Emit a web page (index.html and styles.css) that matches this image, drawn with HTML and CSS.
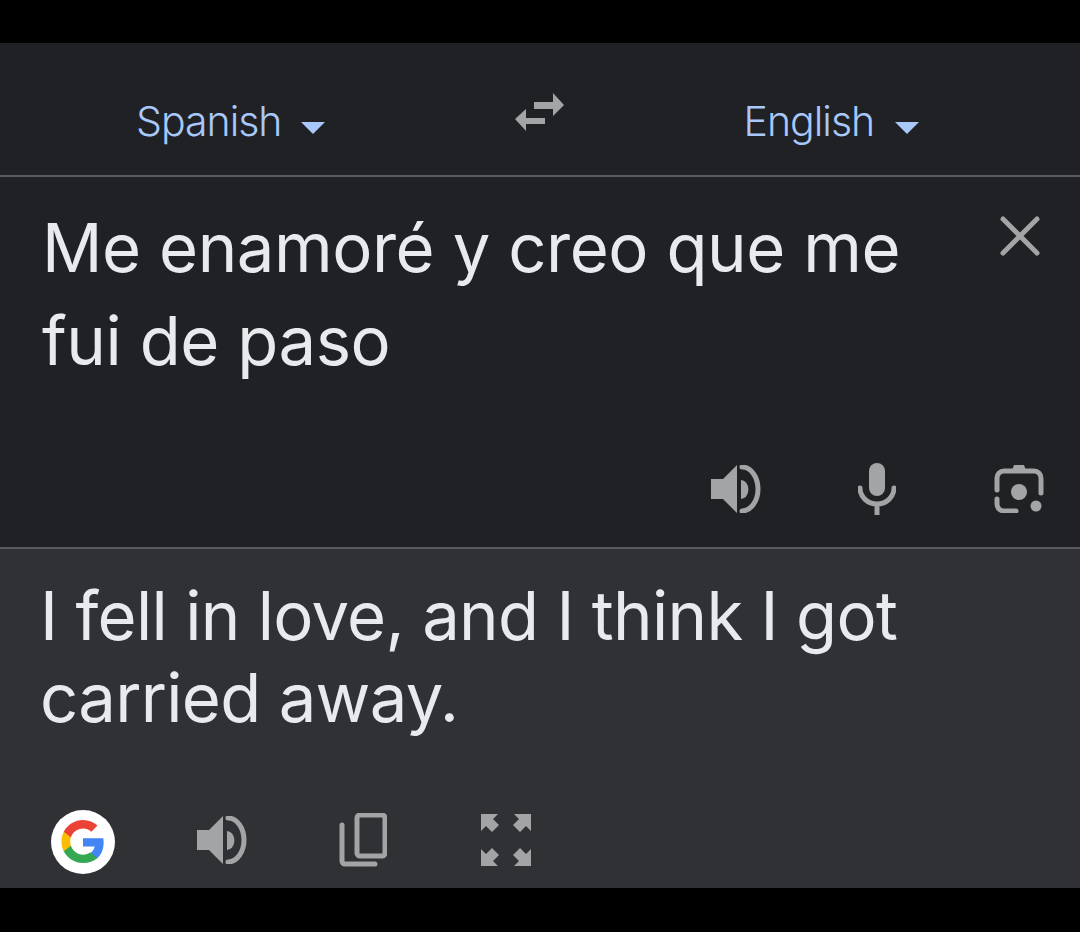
FILE: index.html
```html
<!DOCTYPE html>
<html lang="en">
	<head>
		<meta charset="UTF-8" />
		<title>Translate</title>
		<link rel="stylesheet" href="styles.css">
	</head>
	<body>
		<div class="translate">
			<div class="lang-bar">
				<button class="lang lang-from">Spanish <span class="caret"></span></button>
				<svg class="swap" width="50" height="38" viewBox="0 0 50 38">
					<path d="M19 9h19V0l11 12-11 11v-7H19z"/>
					<path d="M30 25H11v-9L0 26l11 12v-7h19z"/>
				</svg>
				<button class="lang lang-to">English <span class="caret"></span></button>
			</div>

			<div class="source">
				<div class="source-top">
					<p class="source-text">Me enamoré y creo que me fui de paso</p>
					<svg class="clear" width="40" height="40" viewBox="0 0 40 40">
						<path d="M3 3l34 34M37 3L3 37"/>
					</svg>
				</div>
				<div class="source-tools">
					<svg class="tool tool-speaker" width="50" height="48" viewBox="0 0 50 48">
						<path class="fill" d="M0 14h12L26 0v48L12 34H0z"/>
						<path class="fill" d="M30 15a7 9 0 0 1 0 19z"/>
						<path class="line" d="M31 2a16 22 0 0 1 0 44"/>
					</svg>
					<svg class="tool tool-mic" width="38" height="52" viewBox="0 0 38 52">
						<rect class="fill" x="11" y="0" width="16" height="33" rx="8"/>
						<path class="line" d="M2 25a17 16 0 0 0 34 0M19 41v11"/>
					</svg>
					<svg class="tool tool-lens" width="50" height="48" viewBox="0 0 50 48">
						<path class="line" d="M22 46H10a7 7 0 0 1-7-7v-5M3 25v-12a7 7 0 0 1 7-7h30a7 7 0 0 1 7 7v15"/>
						<path class="fill" d="M17 8l3-8h10l3 8z"/>
						<circle class="fill" cx="25" cy="27" r="8"/>
						<circle class="fill" cx="42" cy="41" r="5.500"/>
					</svg>
				</div>
			</div>

			<div class="result">
				<p class="result-text">I fell in love, and I think I got carried away.</p>
				<div class="result-tools">
					<div class="g-badge">
						<svg width="44" height="44" viewBox="0 0 48 48">
							<path fill="#4285f4" d="M46.500 24.500c0-1.600-.15-3.200-.4-4.700H24v9h12.700c-.55 2.900-2.200 5.400-4.700 7.100v5.900h7.600c4.400-4.100 6.900-10.100 6.900-17.300z"/>
							<path fill="#34a853" d="M24 47c6.300 0 11.600-2.100 15.600-5.600L32 35.500c-2.100 1.400-4.800 2.300-8 2.300-6.100 0-11.300-4.100-13.200-9.700H3v6.100C6.900 41.800 14.900 47 24 47z"/>
							<path fill="#fbbc05" d="M10.800 28.100c-.5-1.400-.75-2.900-.75-4.600s.25-3.200.75-4.600v-6.100H3C1.400 15.900.5 19.600.5 23.500s.9 7.600 2.500 10.700z"/>
							<path fill="#ea4335" d="M24 9.300c3.500 0 6.600 1.200 9.100 3.500l6.700-6.700C35.600 2.300 30.300 0 24 0 14.900 0 6.900 5.200 3 12.800l7.800 6.100C12.700 13.400 17.900 9.300 24 9.300z"/>
						</svg>
					</div>
					<svg class="tool tool-speaker" width="50" height="48" viewBox="0 0 50 48">
						<path class="fill" d="M0 14h12L26 0v48L12 34H0z"/>
						<path class="fill" d="M30 15a7 9 0 0 1 0 19z"/>
						<path class="line" d="M31 2a16 22 0 0 1 0 44"/>
					</svg>
					<svg class="tool tool-copy" width="48" height="54" viewBox="0 0 48 54">
						<rect class="line" x="18" y="2" width="28" height="41" rx="3"/>
						<path class="line" d="M3 12v36a3 3 0 0 0 3 3h30"/>
					</svg>
					<svg class="tool tool-expand" width="50" height="52" viewBox="0 0 50 52">
						<path class="fill" d="M0 0h17l-5 5 6 6-7 7-6-6-5 5z"/>
						<path class="fill" d="M50 0H33l5 5-6 6 7 7 6-6 5 5z"/>
						<path class="fill" d="M0 52H17l-5-5 6-6-7-7-6 6-5-5z"/>
						<path class="fill" d="M50 52H33l5-5-6-6 7-7 6 6 5-5z"/>
					</svg>
				</div>
			</div>
		</div>
	</body>
</html>
```

FILE: styles.css
```css
* {
	margin: 0;
	padding: 0;
	box-sizing: border-box;
}

body {
	background: #000;
	font-family: Inter, Roboto, 'Liberation Sans', sans-serif;
	height: 932px;
	overflow: hidden;
	padding-top: 43px;
}

.translate {
	height: 845px;
	display: flex;
	flex-direction: column;
}

/* language bar */
.lang-bar {
	height: 134px;
	flex: none;
	background: #202124;
	border-bottom: 2px solid #5a5b5e;
	display: flex;
	align-items: center;
	padding: 0 0 0 136px;
}

.lang {
	background: none;
	border: none;
	color: #a8c7fa;
	font-family: inherit;
	font-size: 41px;
	font-weight: 350;
	letter-spacing: -1px;
	display: flex;
	align-items: center;
	gap: 19px;
	margin-top: 24px;
}

.lang-to {
	gap: 21px;
}

.caret {
	width: 0;
	height: 0;
	border-left: 12px solid transparent;
	border-right: 12px solid transparent;
	border-top: 12px solid #a8c7fa;
	margin-top: 14px;
}

.swap {
	margin: 6px 179px 0 190px;
	fill: #a3a4a6;
}

/* source pane */
.source {
	height: 372px;
	flex: none;
	background: #202124;
	border-bottom: 2px solid #5a5b5e;
	padding: 24px 36px 32px 42px;
	display: flex;
	flex-direction: column;
	justify-content: space-between;
}

.source-top {
	display: flex;
	justify-content: space-between;
	align-items: flex-start;
}

.source-text {
	width: 900px;
	font-size: 67px;
	font-weight: 380;
	letter-spacing: -0.45px;
	line-height: 93px;
	color: #e8eaed;
}

.clear {
	margin: 15px 4px 0 0;
	stroke: #a3a4a6;
	stroke-width: 5;
	stroke-linecap: round;
}

.source-tools {
	display: flex;
	justify-content: flex-end;
	align-items: center;
}

.source-tools .tool-speaker {
	margin-right: 97px;
}

.source-tools .tool-mic {
	margin-right: 98px;
}

/* result pane */
.result {
	flex: 1;
	background: #303134;
	padding: 26px 0 14px 40px;
	display: flex;
	flex-direction: column;
	justify-content: space-between;
}

.result-text {
	width: 900px;
	font-size: 67px;
	font-weight: 380;
	letter-spacing: -0.7px;
	line-height: 82px;
	color: #e8eaed;
}

.result-tools {
	display: flex;
	align-items: center;
	padding-left: 11px;
}

.result-tools .tool {
	margin-bottom: 4px;
}

.g-badge {
	width: 64px;
	height: 64px;
	border-radius: 50%;
	background: #fff;
	display: flex;
	align-items: center;
	justify-content: center;
	margin-right: 82px;
}

.result-tools .tool-copy {
	margin: 0 94px 4px 92px;
}

.tool {
	flex: none;
}

.tool .fill {
	fill: #a3a4a6;
}

.tool .line {
	fill: none;
	stroke: #a3a4a6;
	stroke-width: 5;
	stroke-linecap: round;
}
```
